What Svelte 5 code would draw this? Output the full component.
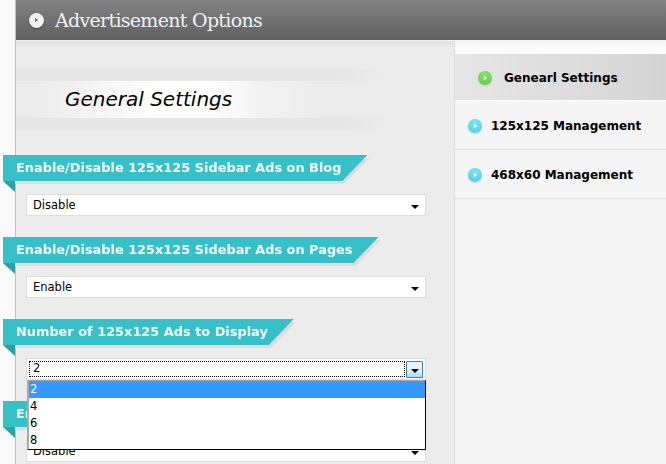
<script>
  const sections = [
    { title: "Enable/Disable 125x125 Sidebar Ads on Blog", value: "Disable" },
    { title: "Enable/Disable 125x125 Sidebar Ads on Pages", value: "Enable" },
    { title: "Number of 125x125 Ads to Display", value: "2", open: true, options: ["2", "4", "6", "8"] },
    { title: "Enable/Disable 468x60 Ads", value: "Disable" }
  ];
  const menu = [
    { label: "Genearl Settings", active: true },
    { label: "125x125 Management" },
    { label: "468x60 Management" }
  ];
</script>

<div class="page">
  <header class="top">
    <span class="top-icon"><i></i></span>
    <h1>Advertisement Options</h1>
  </header>

  <div class="body">
    <main class="main">
      <div class="heading"><h2>General Settings</h2></div>

      {#each sections as s}
        <section class="opt">
          <div class="ribbon-wrap"><div class="ribbon">{s.title}</div></div>
          <div class="fold"></div>
          <div class="select" class:open={s.open}>
            <span class="val">{s.value}</span>
            <span class="arrow-box"><span class="arrow"></span></span>
            {#if s.options}
              <ul class="list">
                {#each s.options as o, i}
                  <li class:sel={i === 0}>{o}</li>
                {/each}
              </ul>
            {/if}
          </div>
        </section>
      {/each}
    </main>

    <aside class="side">
      <div class="side-top"></div>
      {#each menu as m}
        <div class="item" class:active={m.active}>
          <span class="dot"><i></i></span>
          <span>{m.label}</span>
        </div>
      {/each}
    </aside>
  </div>
</div>

<style>
  :global(body) { margin: 0; background: #f9f9f9; overflow: hidden; }
  .page { width: 651px; height: 464px; margin-left: 15px; border-left: 1px solid #c0c0c0; box-sizing: border-box; }

  .top { height: 40px; display: flex; align-items: center; padding-left: 13px; gap: 11px; background: linear-gradient(#828282, #606060); border-bottom: 1px solid #f2f2f2; }
  .top h1 { margin: 0; font: 400 19px "DejaVu Serif", serif; letter-spacing: -0.7px; color: #f0f3f6; }
  .top-icon { width: 15px; height: 15px; border-radius: 50%; background: #efefef; display: flex; align-items: center; justify-content: center; box-shadow: 0 1px 2px #444; }
  .top-icon i { border-left: 3px solid #666; border-top: 2px solid transparent; border-bottom: 2px solid transparent; }

  .body { display: flex; height: 423px; }
  .main { width: 438px; background: linear-gradient(#e0e0e0, #ececec 7px); padding-top: 28px; box-sizing: border-box; flex: none; }

  .heading { height: 61px; margin-bottom: 25px; padding: 12px 0; box-sizing: border-box; display: flex; background:
      linear-gradient(90deg, #e6e6e6 88%, #ececec) 0 0 / 366px 12px no-repeat,
      linear-gradient(90deg, #e6e6e6 88%, #ececec) 0 100% / 372px 13px no-repeat; }
  .heading h2 { margin: 0 0 0 17px; width: 288px; padding-left: 32px; box-sizing: border-box; font: italic 400 20px/37px "DejaVu Sans", sans-serif; color: #000; white-space: nowrap; background: linear-gradient(90deg, #ececec, #f6f6f6 25%, #fff 45%, #fff 60%, #f3f3f3 78%, #ececec); }

  .opt { height: 82px; position: relative; }
  .ribbon-wrap { display: inline-block; vertical-align: top; margin-left: -13px; filter: drop-shadow(2px 3px 0 #dcdcdc); }
  .ribbon { height: 26px; padding: 0 26px 0 13px; background: #38c0c9; clip-path: polygon(0 0, 100% 0, calc(100% - 25px) 100%, 0 100%); font: 700 12.9px/25px "DejaVu Sans", sans-serif; color: #f2fbfb; white-space: nowrap; }
  .fold { position: absolute; left: -13px; top: 26px; width: 0; height: 0; border-top: 11px solid #26a2a8; border-left: 12px solid transparent; }

  .select { position: relative; margin: 13px 0 0 10px; width: 400px; height: 22px; box-sizing: border-box; background: #fff; border: 1px solid #dedede; display: flex; align-items: center; justify-content: space-between; font: 400 11.5px "DejaVu Sans", sans-serif; color: #000; }
  .val { padding-left: 6px; }
  .arrow-box { width: 17px; height: 17px; margin-right: 2px; display: flex; align-items: center; justify-content: center; }
  .arrow { width: 0; height: 0; margin-top: 3px; border-top: 4px solid #000; border-left: 4px solid transparent; border-right: 4px solid transparent; }

  .select.open .val { position: absolute; left: 2px; right: 20px; top: 2px; bottom: 2px; padding-left: 4px; line-height: 15px; outline: 1px dotted #000; outline-offset: -1px; }
  .select.open { justify-content: flex-end; z-index: 2; }
  .select.open .arrow-box { border: 1px solid #3c7fb1; box-sizing: border-box; border-radius: 1px; background: linear-gradient(#eaf7ff 40%, #a9dbf6); }
  .list { position: absolute; left: 0; top: 21px; width: 396px; margin: 0; padding: 0; list-style: none; background: #fff; border: 1px solid #000; border-top-color: #aaa; border-left-color: #aaa; border-left-width: 2px; }
  .list li { height: 17px; line-height: 17px; padding-left: 1px; }
  .list li.sel { background: #3399ff; color: #fff; }

  .side { flex: 1; background: #f5f5f5; border-left: 1px solid #dddddd; }
  .side-top { height: 13px; background: linear-gradient(#f4f4f4, #fff); }
  .item { height: 49px; box-sizing: border-box; padding-top: 2px; border-bottom: 1px solid #dedede; display: flex; align-items: center; padding-left: 13px; gap: 9px; font: 700 12px "DejaVu Sans", sans-serif; color: #000; }
  .item.active { height: 47px; padding-left: 23px; gap: 12px; background: linear-gradient(90deg, #e6e6e6, #d4d4d4); border-bottom-color: #fff; }
  .dot { width: 14px; height: 14px; border-radius: 50%; background: radial-gradient(circle at 50% 30%, #7ae6f4, #4ccbe0); display: flex; align-items: center; justify-content: center; box-shadow: 0 1px 2px #ccc; }
  .active .dot { background: radial-gradient(circle at 50% 30%, #8be36a, #5cc83e); }
  .dot i { border-left: 3px solid #fff; border-top: 2px solid transparent; border-bottom: 2px solid transparent; }
</style>
